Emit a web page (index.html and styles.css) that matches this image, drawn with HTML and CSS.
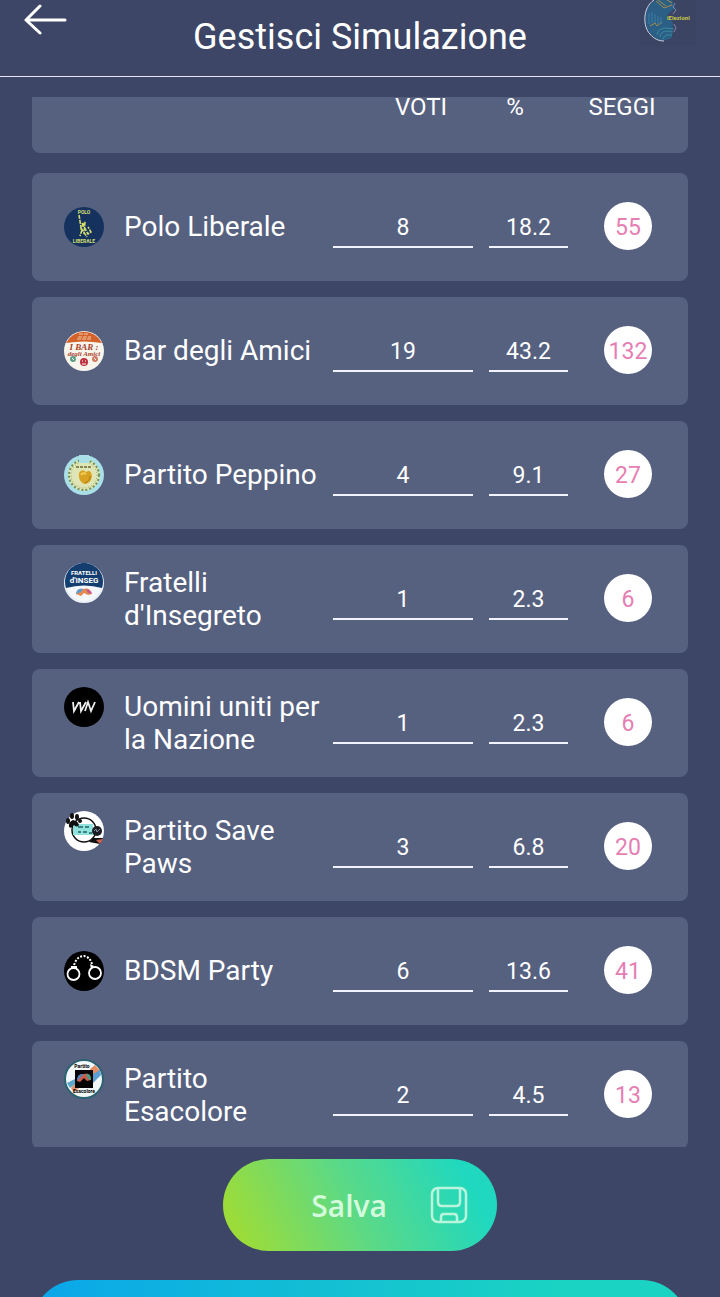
FILE: index.html
```html
<!DOCTYPE html>
<html lang="it">
<head>
  <meta charset="utf-8">
  <meta name="viewport" content="width=device-width, initial-scale=1">
  <title>Gestisci Simulazione</title>
  <link rel="stylesheet" href="styles.css">
</head>

<body>
  <header class="header">
    <a class="back" href="#" aria-label="Indietro">
      <svg width="44" height="32" viewBox="0 0 44 32" fill="none" stroke="#fff" stroke-width="3" stroke-linecap="round" stroke-linejoin="round">
        <path d="M41 16H2M16 2L2 16L16 29"/>
      </svg>
    </a>
    <h1 class="title">Gestisci Simulazione</h1>
    <svg class="brand" width="56" height="46" viewBox="0 0 56 46" fill="none">
      <rect width="56" height="46" fill="#3b4463"/>
      <path d="M16 0C7 5 4 14 6 23C8 33 14 39 23 41L32 38L33 23L27 15L35 8L32 0Z" fill="#2b5f86"/>
      <path d="M14 0C2 8 3 27 10 34C14 39 19 41 24 41" stroke="#cfd6ea" stroke-width="1"/>
      <path d="M16 1L24 8L32 5M18 0L26 6M10 26L15 23L17 26L22 22M27 0L32 3" stroke="#a58d4b" stroke-width="1"/>
      <path d="M9 13V24M12 12V23M15 14V23M18 16V24M21 17V24" stroke="#3e7da6" stroke-width="1"/>
      <path d="M17 35Q18 28 26 28L34 29M20 37Q21 31 27 31L33 32M23 39Q24 34 32 35" stroke="#398b9d" stroke-width="1"/>
      <path d="M35 3L33 7L36 10L33 14M34 24L36 28L34 32" stroke="#8087a8" stroke-width="1"/>
      <text class="brand-text" x="27" y="20">iElezioni</text>
    </svg>
  </header>

  <div class="card head">
    <span>VOTI</span>
    <span>%</span>
    <span>SEGGI</span>
  </div>

  <main class="list">
    <div class="card row">
      <div class="party">
        <svg class="logo" viewBox="0 0 40 40">
          <circle cx="20" cy="20" r="20" fill="#15325f"/>
          <text class="tiny lime" x="20" y="7">POLO</text>
          <path d="M15 8L16 14L17 21L21 15L20 27M17 21L23 30M18 16L24 27L27 25L24 20M18 23L16 29" fill="none" stroke="#d3dd6e" stroke-width="1.6" stroke-dasharray="4 1"/>
          <text class="tiny lime" x="20" y="36">LIBERALE</text>
        </svg>
        <label class="name" for="voti1">Polo Liberale</label>
      </div>
      <input class="field" id="voti1" type="text" value="8">
      <input class="field" type="text" value="18.2" aria-label="%">
      <span class="seats">55</span>
    </div>

    <div class="card row">
      <div class="party">
        <svg class="logo" viewBox="0 0 40 40">
          <circle cx="20" cy="20" r="20" fill="#f8f5ec"/>
          <path d="M2 12A20 20 0 0 1 38 12Q20 9 2 12Z" fill="#d4622b"/>
          <path d="M15 3H24M14 6H27M13 8H28" stroke="#f2c9a8" stroke-width="1" stroke-dasharray="4 1"/>
          <text class="bar-text" x="20" y="19">I BAR :</text>
          <text class="bar-text bar-small" x="20" y="25">degli Amici</text>
          <circle cx="9" cy="28" r="3" fill="#5c9d86"/>
          <circle cx="20" cy="31" r="4" fill="#bd2f3b"/>
          <circle cx="31" cy="28" r="3" fill="#d27a64"/>
          <path d="M18 30H19M21 30H22M18 33H22M8 27L10 29M30 27L32 29" stroke="#fff" stroke-width="1"/>
        </svg>
        <label class="name" for="voti2">Bar degli Amici</label>
      </div>
      <input class="field" id="voti2" type="text" value="19">
      <input class="field" type="text" value="43.2" aria-label="%">
      <span class="seats">132</span>
    </div>

    <div class="card row">
      <div class="party">
        <svg class="logo" viewBox="0 0 40 40">
          <circle cx="20" cy="20" r="20" fill="#a9e0e8"/>
          <circle cx="20" cy="20" r="16" fill="#dfe5b5"/>
          <circle cx="20" cy="20" r="15" fill="none" stroke="#71905c" stroke-width="2" stroke-dasharray="2 2"/>
          <circle cx="20" cy="20" r="13" fill="none" stroke="#8da86c" stroke-width="1" stroke-dasharray="1 2"/>
          <path d="M15 0H25V8H15Z" fill="#a9e0e8"/>
          <path d="M12 12L28 12" stroke="#6a6a35" stroke-width="1.5" stroke-dasharray="3 1"/>
          <path d="M15 18Q18 13 22 17Q27 14 28 21Q27 29 20 29Q14 26 15 18Z" fill="#d8a323"/>
          <path d="M17 20Q19 17 22 19" fill="none" stroke="#f2cc58" stroke-width="2"/>
          <path d="M26 21Q26 26 21 28" fill="none" stroke="#a97718" stroke-width="1"/>
        </svg>
        <label class="name" for="voti3">Partito Peppino</label>
      </div>
      <input class="field" id="voti3" type="text" value="4">
      <input class="field" type="text" value="9.1" aria-label="%">
      <span class="seats">27</span>
    </div>

    <div class="card row">
      <div class="party">
        <svg class="logo" viewBox="0 0 40 40">
          <circle cx="20" cy="20" r="19" fill="#f5f8fb" stroke="#e9eff6" stroke-width="2"/>
          <path d="M2 25A19 19 0 1 1 38 25Q20 20 2 25Z" fill="#153e70"/>
          <text class="frat" x="20" y="12">FRATELLI</text>
          <text class="frat frat-big" x="20" y="20">d'INSEG</text>
          <path d="M12 31Q13 25 19 26Q26 24 28 31L24 32L20 30L17 33Z" fill="#e58a50"/>
          <path d="M12 31Q13 25 19 26L17 29Z" fill="#5a9bd0"/>
          <path d="M22 26Q27 27 28 31L24 30Z" fill="#c95590"/>
        </svg>
        <label class="name" for="voti4">Fratelli d'Insegreto</label>
      </div>
      <input class="field" id="voti4" type="text" value="1">
      <input class="field" type="text" value="2.3" aria-label="%">
      <span class="seats">6</span>
    </div>

    <div class="card row">
      <div class="party">
        <svg class="logo" viewBox="0 0 40 40">
          <circle cx="20" cy="20" r="20" fill="#000"/>
          <path d="M9 15L10 24L15 15M16 15L17 24L22 15M21 24L24 15L27 24L31 15" fill="none" stroke="#eee" stroke-width="1.8"/>
        </svg>
        <label class="name" for="voti5">Uomini uniti per la Nazione</label>
      </div>
      <input class="field" id="voti5" type="text" value="1">
      <input class="field" type="text" value="2.3" aria-label="%">
      <span class="seats">6</span>
    </div>

    <div class="card row">
      <div class="party">
        <svg class="logo" viewBox="0 0 40 40">
          <circle cx="20" cy="20" r="20" fill="#fff"/>
          <circle cx="20" cy="19" r="12" fill="none" stroke="#111" stroke-width="1.5"/>
          <rect x="9" y="13" width="20" height="11" fill="#8fe3dd"/>
          <path d="M14 16H19M21 16H25M14 21H17M19 21H23M25 22H28" stroke="#26615f" stroke-width="1.5"/>
          <path d="M5 16Q4 11 9 9Q14 10 15 14Q13 17 10 14Q8 18 5 16Z" fill="#111"/>
          <ellipse cx="4" cy="10" rx="2" ry="3" fill="#111"/>
          <ellipse cx="8" cy="5" rx="2" ry="3" fill="#111"/>
          <ellipse cx="13" cy="6" rx="2" ry="3" fill="#111"/>
          <circle cx="16" cy="10" r="2" fill="#111"/>
          <circle cx="33" cy="20" r="5" fill="#1b1b22"/>
          <path d="M30 20L32 18L33 21L36 18" fill="none" stroke="#8a93a3" stroke-width="1"/>
          <path d="M25 31L29 27H39L36 33Z" fill="#111"/>
          <path d="M32 29L39 28L36 33Z" fill="#cf6455"/>
        </svg>
        <label class="name" for="voti6">Partito Save Paws</label>
      </div>
      <input class="field" id="voti6" type="text" value="3">
      <input class="field" type="text" value="6.8" aria-label="%">
      <span class="seats">20</span>
    </div>

    <div class="card row">
      <div class="party">
        <svg class="logo" viewBox="0 0 40 40">
          <circle cx="20" cy="20" r="20" fill="#000"/>
          <g fill="none" stroke="#fff" stroke-width="1.8">
            <circle cx="9.500" cy="23" r="6"/>
            <circle cx="31" cy="22" r="6"/>
            <path d="M10 14Q13 5 20 5Q26 6 28 13" stroke-width="2" stroke-dasharray="2 1.500"/>
          </g>
          <path d="M7 15H13V18H7ZM26 13L30 15L27 18Z" fill="#fff"/>
        </svg>
        <label class="name" for="voti7">BDSM Party</label>
      </div>
      <input class="field" id="voti7" type="text" value="6">
      <input class="field" type="text" value="13.6" aria-label="%">
      <span class="seats">41</span>
    </div>

    <div class="card row">
      <div class="party">
        <svg class="logo" viewBox="0 0 40 40">
          <circle cx="20" cy="20" r="19" fill="#f3f8fa" stroke="#2c6370" stroke-width="2"/>
          <path d="M26 10L31 6L36 12L29 18Z" fill="#e58c62"/>
          <path d="M29 15L36 11L37 16L29 24Z" fill="#5a9ed2"/>
          <path d="M7 29L11 24L15 29L10 34Z" fill="#e29470"/>
          <path d="M3 24L11 20L12 24L6 29Z" fill="#5ba6c9"/>
          <text class="tiny" x="18" y="9">Partito</text>
          <text class="tiny" x="20" y="34">Esacolore</text>
          <rect x="11" y="11" width="18" height="18" fill="#050505"/>
          <path d="M13 22Q13 14 20 15Q27 13 27 21L23 22L20 19L16 23Z" fill="#cc5d4b"/>
          <path d="M13 22Q13 14 20 15L17 18Z" fill="#4b83c0"/>
          <path d="M22 15Q27 14 27 21L24 20Z" fill="#3f9e83"/>
        </svg>
        <label class="name" for="voti8">Partito Esacolore</label>
      </div>
      <input class="field" id="voti8" type="text" value="2">
      <input class="field" type="text" value="4.5" aria-label="%">
      <span class="seats">13</span>
    </div>
  </main>

  <footer class="footer">
    <button class="save" type="button">
      <span>Salva</span>
      <svg width="38" height="38" viewBox="0 0 38 38" fill="none" stroke="#b9f5dc" stroke-width="2.500" stroke-linejoin="round">
        <rect x="2" y="2" width="34" height="34" rx="6"/>
        <path d="M8 2V16Q8 20 12 20H26Q30 20 30 16V2"/>
        <path d="M11 36V31Q11 28 14 28H24Q27 28 27 31V36"/>
      </svg>
    </button>
    <button class="next" type="button" aria-label="Avanti"></button>
  </footer>
</body>
</html>
```
FILE: styles.css
```css
* {
  box-sizing: border-box;
}
body {
  height: 100vh;
  margin: 0;
  display: flex;
  flex-direction: column;
  overflow: hidden;
  background-color: #3d4666;
  color: #fff;
  font-family: Roboto, Arial, sans-serif;
}

.header {
  flex: none;
  display: flex;
  align-items: flex-start;
  justify-content: space-between;
  padding: 0 24px;
  border-bottom: 1px solid #e6e8f5;
}
.back {
  width: 56px;
  padding-top: 4px;
}
.back svg {
  display: block;
}
.title {
  margin: 0;
  padding-bottom: 2px;
  font-size: 36px;
  font-weight: 400;
  line-height: 74px;
}
.brand-text {
  font-size: 6px;
  font-weight: 700;
  fill: #c9c748;
}

.card {
  background-color: #566180;
  border-radius: 8px;
}
.head {
  flex: none;
  display: grid;
  grid-template-columns: 1fr 80px 68px 106px;
  column-gap: 20px;
  height: 56px;
  margin: 20px 32px;
  padding-right: 13px;
  border-radius: 0 0 8px 8px;
  font-size: 24px;
  line-height: 20px;
  text-align: center;
}
.head span:first-child {
  grid-column: 2;
}

.list {
  flex: 1;
  min-height: 0;
  margin: 0 32px;
  overflow-y: auto;
  scrollbar-width: none;
}
.row {
  display: grid;
  grid-template-columns: 1fr 140px 79px 68px;
  column-gap: 16px;
  align-items: center;
  height: 108px;
  margin-bottom: 16px;
  padding: 0 36px 0 32px;
}
.row:last-child {
  margin-bottom: 0;
}
.party {
  display: flex;
  align-items: flex-start;
  gap: 20px;
  margin-right: -12px;
}
.logo {
  flex: none;
  width: 40px;
  height: 40px;
}
.name {
  padding: 3px 0;
  font-size: 28px;
  line-height: 33px;
}
.field {
  width: 100%;
  height: 42px;
  padding: 2px 0 0;
  border: 0;
  border-bottom: 2px solid #f1f4ff;
  background: none;
  color: #fff;
  font-family: inherit;
  font-size: 23px;
  text-align: center;
}
.seats {
  justify-self: end;
  width: 48px;
  height: 48px;
  margin-bottom: 2px;
  border-radius: 50%;
  background-color: #fff;
  color: #e57fb3;
  font-size: 23px;
  line-height: 52px;
  text-align: center;
}

/* lettering inside the party logos */
.tiny {
  font-size: 5px;
  font-weight: 700;
  text-anchor: middle;
}
.lime {
  fill: #d3dd6e;
}
.bar-text {
  font: italic 700 9px "Liberation Serif", serif;
  fill: #a8442e;
  text-anchor: middle;
}
.bar-small {
  font-size: 7px;
}
.frat {
  font-size: 6px;
  font-weight: 700;
  fill: #fff;
  text-anchor: middle;
}
.frat-big {
  font-size: 8px;
}

.footer {
  flex: none;
  height: 150px;
  padding: 12px 32px 0;
  overflow: hidden;
}
.save,
.next {
  display: block;
  height: 92px;
  border: 0;
  border-radius: 46px;
  cursor: pointer;
}
.save {
  display: flex;
  align-items: center;
  justify-content: flex-end;
  gap: 43px;
  width: 274px;
  margin: 0 auto 29px;
  padding: 0 29px 0 0;
  background: linear-gradient(64deg, #9bdc3a 8%, #58d98a 50%, #1fd8bf 88%);
  color: #d3fbdc;
  font-family: "Open Sans", sans-serif;
  font-size: 30px;
  font-weight: 600;
}
.next {
  width: 100%;
  background: linear-gradient(90deg, #0aa6ea, #1ad3c2 80%);
}
```
